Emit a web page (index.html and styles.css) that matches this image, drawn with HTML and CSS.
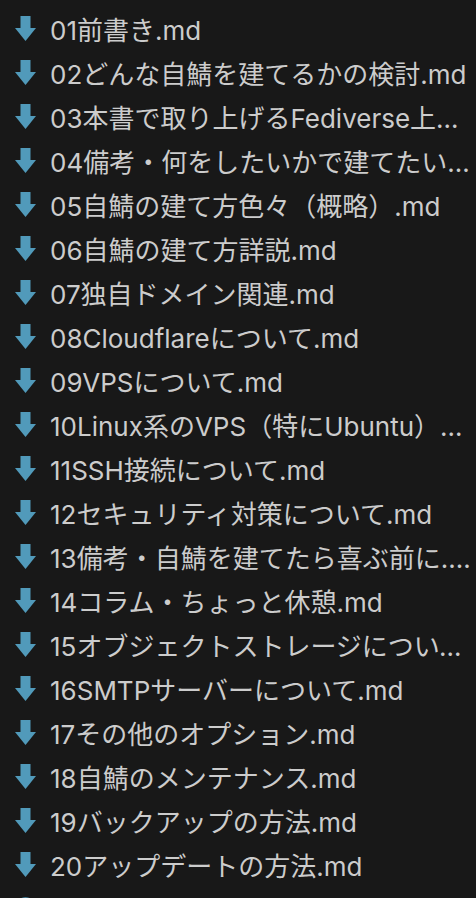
FILE: index.html
```html
<!DOCTYPE html>
<html lang="ja">
<head>
  <meta charset="UTF-8">
  <meta name="viewport" content="width=device-width, initial-scale=1.0">
  <title>Files</title>
  <link rel="stylesheet" href="styles.css">
</head>
<body>
  <ul class="file-list" id="file-list"></ul>
  <script>
    const files = [
      "01前書き.md",
      "02どんな自鯖を建てるかの検討.md",
      "03本書で取り上げるFediverse上のソフトウェア.md",
      "04備考・何をしたいかで建てたいサーバーは変わる.md",
      "05自鯖の建て方色々（概略）.md",
      "06自鯖の建て方詳説.md",
      "07独自ドメイン関連.md",
      "08Cloudflareについて.md",
      "09VPSについて.md",
      "10Linux系のVPS（特にUbuntu）について.md",
      "11SSH接続について.md",
      "12セキュリティ対策について.md",
      "13備考・自鯖を建てたら喜ぶ前に.md",
      "14コラム・ちょっと休憩.md",
      "15オブジェクトストレージについて.md",
      "16SMTPサーバーについて.md",
      "17その他のオプション.md",
      "18自鯖のメンテナンス.md",
      "19バックアップの方法.md",
      "20アップデートの方法.md"
    ];

    const arrowIcon = `<svg class="icon" viewBox="0 0 21 25" width="21" height="25">
      <rect x="5.5" y="0" width="10" height="13" fill="#519aba"/>
      <polygon points="0,12 21,12 10.5,25" fill="#519aba"/>
    </svg>`;

    const circleIcon = `<svg class="icon" viewBox="0 0 21 25" width="21" height="25">
      <circle cx="10.5" cy="12.5" r="10" fill="none" stroke="#519aba" stroke-width="2.5"/>
    </svg>`;

    const list = document.getElementById('file-list');
    files.forEach(name => {
      list.innerHTML += `<li class="file-row">${arrowIcon}<span class="file-name">${name}</span></li>`;
    });
    // next row is cut off by the window edge
    list.innerHTML += `<li class="file-row">${circleIcon}<span class="file-name">21おわりに.md</span></li>`;
  </script>
</body>
</html>
```

FILE: styles.css
```css
body, html {
  margin: 0;
  padding: 0;
  height: 100%;
  background: #181818;
  overflow: hidden;
  font-family: Inter, "Noto Sans CJK JP", sans-serif;
}
.file-list {
  list-style: none;
  margin: 0;
  padding: 6px 2px 0 15px;
}
.file-row {
  display: flex;
  align-items: center;
  gap: 14px;
  height: 44px;
}
.icon {
  flex: none;
}
.file-name {
  color: #cccccc;
  font-size: 26px;
  white-space: nowrap;
  overflow: hidden;
  text-overflow: ellipsis;
}
```
